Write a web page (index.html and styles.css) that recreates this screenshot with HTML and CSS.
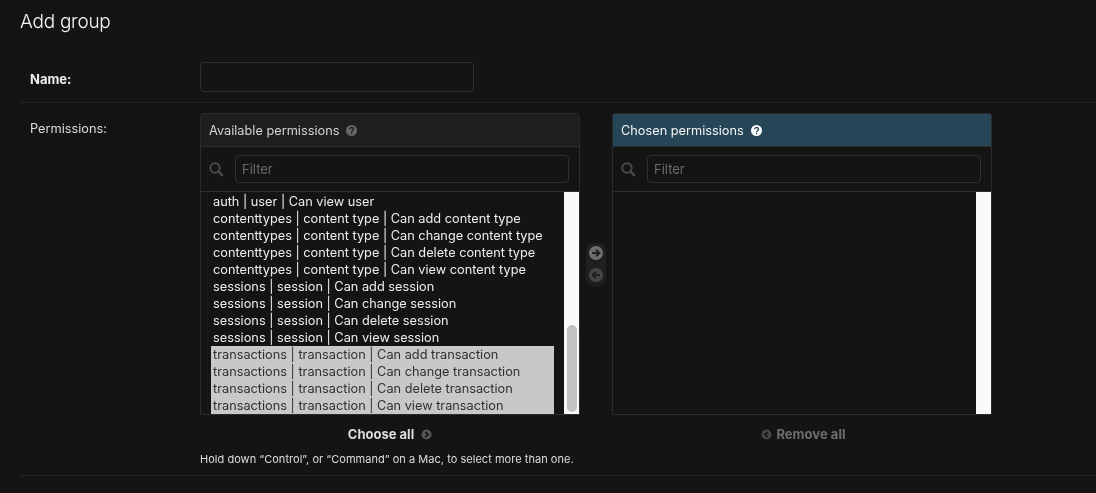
FILE: index.html
```html
<!DOCTYPE html>
<html lang="en">
<head>
  <meta charset="UTF-8">
  <meta name="viewport" content="width=device-width, initial-scale=1.0">
  <title>Add group</title>
  <link rel="stylesheet" href="styles.css">
</head>
<body>
  <h1>Add group</h1>

  <div class="form-row name-row">
    <label class="field-label required">Name:</label>
    <input type="text" class="name-input">
  </div>

  <div class="form-row perm-row">
    <label class="field-label">Permissions:</label>
    <div class="field-body">
      <div class="selector">
        <div class="side">
          <div class="panel">
            <h2 class="panel-title">Available permissions
              <svg class="help-icon" viewBox="0 0 16 16"><circle cx="8" cy="8" r="8" fill="currentColor"/><path d="M5.3 6.2a2.7 2.5 0 1 1 4.1 2.1c-.9.6-1.4 1-1.4 1.9" fill="none" stroke="var(--help-mark)" stroke-width="2"/><rect x="7" y="11.3" width="2" height="2" fill="var(--help-mark)"/></svg>
            </h2>
            <div class="filter">
              <svg class="search-icon" viewBox="0 0 15 15"><circle cx="6" cy="6" r="4.7" fill="none" stroke="currentColor" stroke-width="2"/><path d="M9.5 9.5l4.3 4.3" stroke="currentColor" stroke-width="2.4"/></svg>
              <input type="text" class="filter-input" placeholder="Filter">
            </div>
            <div class="list-wrap">
              <ul class="options">
                <li>auth | user | Can view user</li>
                <li>contenttypes | content type | Can add content type</li>
                <li>contenttypes | content type | Can change content type</li>
                <li>contenttypes | content type | Can delete content type</li>
                <li>contenttypes | content type | Can view content type</li>
                <li>sessions | session | Can add session</li>
                <li>sessions | session | Can change session</li>
                <li>sessions | session | Can delete session</li>
                <li>sessions | session | Can view session</li>
                <li class="selected">transactions | transaction | Can add transaction</li>
                <li class="selected">transactions | transaction | Can change transaction</li>
                <li class="selected">transactions | transaction | Can delete transaction</li>
                <li class="selected">transactions | transaction | Can view transaction</li>
              </ul>
              <div class="scrollbar"><div class="thumb"></div></div>
            </div>
          </div>
          <a class="bulk choose-all">Choose all
            <svg class="bulk-icon" viewBox="0 0 12 12"><circle cx="6" cy="6" r="5.5" fill="currentColor"/><path d="M4.8 3.2L7.6 6 4.8 8.8" fill="none" stroke="#141414" stroke-width="1.8"/></svg>
          </a>
        </div>

        <div class="movers">
          <svg class="move-icon" viewBox="0 0 14 14"><circle cx="7" cy="7" r="7" fill="currentColor"/><path d="M3 7h7M7 3.6L10.4 7 7 10.4" fill="none" stroke="#1f1f1f" stroke-width="2"/></svg>
          <svg class="move-icon off" viewBox="0 0 14 14"><circle cx="7" cy="7" r="7" fill="currentColor"/><path d="M11 7H4M7 3.6L3.6 7 7 10.4" fill="none" stroke="#1f1f1f" stroke-width="2"/></svg>
        </div>

        <div class="side">
          <div class="panel">
            <h2 class="panel-title chosen">Chosen permissions
              <svg class="help-icon" viewBox="0 0 16 16"><circle cx="8" cy="8" r="8" fill="currentColor"/><path d="M5.3 6.2a2.7 2.5 0 1 1 4.1 2.1c-.9.6-1.4 1-1.4 1.9" fill="none" stroke="var(--help-mark)" stroke-width="2"/><rect x="7" y="11.3" width="2" height="2" fill="var(--help-mark)"/></svg>
            </h2>
            <div class="filter">
              <svg class="search-icon" viewBox="0 0 15 15"><circle cx="6" cy="6" r="4.7" fill="none" stroke="currentColor" stroke-width="2"/><path d="M9.5 9.5l4.3 4.3" stroke="currentColor" stroke-width="2.4"/></svg>
              <input type="text" class="filter-input" placeholder="Filter">
            </div>
            <div class="list-wrap">
              <ul class="options"></ul>
              <div class="scrollbar"></div>
            </div>
          </div>
          <a class="bulk remove-all">
            <svg class="bulk-icon" viewBox="0 0 12 12"><circle cx="6" cy="6" r="5.5" fill="currentColor"/><path d="M7.2 3.2L4.4 6l2.8 2.8" fill="none" stroke="#141414" stroke-width="1.8"/></svg>
            Remove all
          </a>
        </div>
      </div>
      <p class="help">Hold down “Control”, or “Command” on a Mac, to select more than one.</p>
    </div>
  </div>
</body>
</html>
```

FILE: styles.css
```css
body {
  margin: 0;
  padding: 0 0 0 20px;
  height: 493px;
  box-sizing: border-box;
  overflow: hidden;
  background: #141414;
  color: #eeeeee;
  font-family: Inter, "Liberation Sans", sans-serif;
  font-size: 12.75px;
  will-change: transform;
}
h1 {
  margin: 0;
  padding-top: 10px;
  height: 62px;
  box-sizing: border-box;
  font-size: 19px;
  line-height: 24px;
  font-weight: 300;
  letter-spacing: -0.25px;
  color: #f5f5f5;
}
.form-row {
  display: flex;
  border-bottom: 1px solid #232323;
}
.name-row {
  height: 40px;
}
.perm-row {
  padding-top: 10px;
  height: 373px;
  box-sizing: border-box;
}
.field-label {
  width: 180px;
  padding-left: 10px;
  box-sizing: border-box;
  color: #dddddd;
}
.required {
  padding-top: 9px;
  font-size: 13px;
  font-weight: 700;
  color: #eeeeee;
}
.perm-row .field-label {
  padding-top: 1px;
  line-height: 30px;
}
.name-input {
  width: 274px;
  height: 30px;
  box-sizing: border-box;
  background: #141414;
  border: 1px solid #2f2f2f;
  border-radius: 4px;
}
.selector {
  display: flex;
}
.side {
  width: 380px;
}
.panel {
  border: 1px solid #2b2b2b;
  border-radius: 4px 4px 0 0;
  height: 302px;
  box-sizing: border-box;
  display: flex;
  flex-direction: column;
}
.panel-title {
  --help-mark: #1e1e1e;
  margin: 0;
  height: 33px;
  padding: 0 8px;
  display: flex;
  align-items: center;
  gap: 7px;
  box-sizing: border-box;
  background: #1e1e1e;
  border-bottom: 1px solid #2f2f2f;
  font-size: 12.75px;
  font-weight: 400;
  color: #d5d5d5;
}
.panel-title .help-icon {
  width: 11px;
  height: 11px;
  color: #666666;
}
.panel-title.chosen {
  --help-mark: #264556;
  background: #264556;
  color: #f5f5f5;
}
.panel-title.chosen .help-icon {
  color: #ffffff;
}
.filter {
  height: 45px;
  padding: 0 10px 1px 8px;
  box-sizing: border-box;
  display: flex;
  align-items: center;
  gap: 11px;
  border-bottom: 1px solid #2f2f2f;
}
.search-icon {
  width: 15px;
  height: 15px;
  margin-top: 2px;
  flex: none;
  color: #4a4a4a;
}
.filter-input {
  flex: 1;
  min-width: 0;
  height: 28px;
  box-sizing: border-box;
  padding: 0 6px;
  background: #141414;
  border: 1px solid #2f2f2f;
  border-radius: 4px;
  font-family: inherit;
  font-size: 13px;
}
.filter-input::placeholder {
  color: #6a6a6a;
}
.list-wrap {
  flex: 1;
  min-height: 0;
  display: flex;
  overflow: hidden;
}
.options {
  flex: 1;
  margin: 0;
  padding: 1px 10px 0;
  list-style: none;
  color: #eeeeee;
}
.options li {
  height: 17px;
  line-height: 17px;
  padding: 0 2px;
  white-space: nowrap;
}
.options .selected {
  background: #c8c8c8;
  color: #303030;
}
.scrollbar {
  width: 15px;
  flex: none;
  padding: 133px 2px 2px 3px;
  box-sizing: border-box;
  background: #fafafa;
}
.thumb {
  height: 87px;
  border-radius: 5px;
  background: #c2c2c2;
}
.movers {
  width: 20px;
  height: 44px;
  margin: 130px 6px 0;
  box-sizing: border-box;
  padding: 3px 0;
  border-radius: 8px;
  background: #1f1f1f;
  display: flex;
  flex-direction: column;
  align-items: center;
  gap: 8px;
}
.move-icon {
  width: 14px;
  height: 14px;
  color: #6e6e6e;
}
.move-icon.off {
  color: #454545;
}
.bulk {
  margin-top: 11px;
  display: flex;
  justify-content: center;
  align-items: center;
  gap: 7px;
  line-height: 16px;
  font-weight: 700;
  font-size: 13px;
}
.choose-all {
  color: #dddddd;
}
.choose-all .bulk-icon {
  color: #555555;
}
.remove-all {
  gap: 4px;
  padding-left: 3px;
  letter-spacing: 0.05px;
  color: #6e6e6e;
}
.remove-all .bulk-icon {
  color: #454545;
}
.bulk-icon {
  width: 11px;
  height: 11px;
}
.help {
  margin: 10px 0 0;
  font-size: 11px;
  line-height: 14px;
  letter-spacing: 0.03px;
  color: #dddddd;
}
```
